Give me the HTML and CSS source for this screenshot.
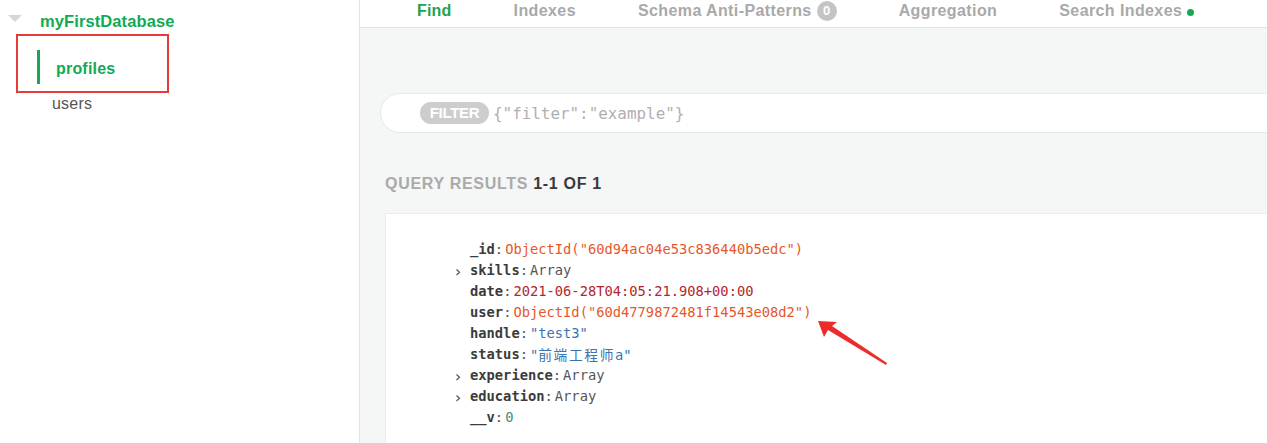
FILE: index.html
```html
<!DOCTYPE html>
<html>
<head>
<meta charset="utf-8">
<link rel="stylesheet" href="styles.css">
</head>
<body>
<aside class="sidebar">
  <div class="db-row">
    <span class="caret"></span>
    <span class="db-name">myFirstDatabase</span>
  </div>
  <div class="highlight-box">
    <div class="coll active"><span class="bar"></span><span>profiles</span></div>
  </div>
  <div class="coll plain">users</div>
</aside>
<main class="main">
  <nav class="tabs">
    <span class="tab active">Find</span>
    <span class="tab">Indexes</span>
    <span class="tab">Schema Anti-Patterns <span class="badge">0</span></span>
    <span class="tab">Aggregation</span>
    <span class="tab">Search Indexes <span class="dot"></span></span>
  </nav>
  <div class="filter-bar">
    <span class="filter-pill">FILTER</span>
    <span class="filter-text">{"filter":"example"}</span>
  </div>
  <div class="results-title">QUERY RESULTS <span class="count">1-1 OF 1</span></div>
  <section class="doc-card">
    <div class="row"><span class="chev"></span><span class="key">_id</span><span class="colon">:</span><span class="oid">ObjectId("60d94ac04e53c836440b5edc")</span></div>
    <div class="row"><span class="chev"><svg width="8" height="8" viewBox="0 0 8 8"><path d="M2.5 1.5 L5.5 4.3 L2.5 7" fill="none" stroke="#555" stroke-width="1.2"/></svg></span><span class="key">skills</span><span class="colon">:</span><span class="arr">Array</span></div>
    <div class="row"><span class="chev"></span><span class="key">date</span><span class="colon">:</span><span class="date">2021-06-28T04:05:21.908+00:00</span></div>
    <div class="row"><span class="chev"></span><span class="key">user</span><span class="colon">:</span><span class="oid">ObjectId("60d4779872481f14543e08d2")</span></div>
    <div class="row"><span class="chev"></span><span class="key">handle</span><span class="colon">:</span><span class="str">"test3"</span></div>
    <div class="row"><span class="chev"></span><span class="key">status</span><span class="colon">:</span><span class="str">"<span class="cjk">前端工程师</span>a"</span></div>
    <div class="row"><span class="chev"><svg width="8" height="8" viewBox="0 0 8 8"><path d="M2.5 1.5 L5.5 4.3 L2.5 7" fill="none" stroke="#555" stroke-width="1.2"/></svg></span><span class="key">experience</span><span class="colon">:</span><span class="arr">Array</span></div>
    <div class="row"><span class="chev"><svg width="8" height="8" viewBox="0 0 8 8"><path d="M2.5 1.5 L5.5 4.3 L2.5 7" fill="none" stroke="#555" stroke-width="1.2"/></svg></span><span class="key">education</span><span class="colon">:</span><span class="arr">Array</span></div>
    <div class="row"><span class="chev"></span><span class="key">__v</span><span class="colon">:</span><span class="num">0</span></div>
  </section>
</main>
<svg class="arrow" width="1267" height="443" viewBox="0 0 1267 443">
  <polygon points="818,321 837,322 832,326 887,363 886,365 828,330 824,337" fill="#ee2b2b"/>
</svg>
</body>
</html>
```
FILE: styles.css
```css
html, body {
  margin: 0;
  padding: 0;
}
body {
  width: 1267px;
  height: 443px;
  overflow: hidden;
  display: flex;
  position: relative;
  font-family: "Liberation Sans", Arial, sans-serif;
  background: #fff;
}
.sidebar {
  width: 359px;
  flex: none;
  border-right: 1px solid #e2e3e3;
  background: #fff;
}
.db-row {
  height: 34px;
  box-sizing: border-box;
  padding-top: 11px;
  display: flex;
  align-items: flex-start;
  line-height: 20px;
}
.caret {
  width: 0;
  height: 0;
  border-left: 7px solid transparent;
  border-right: 7px solid transparent;
  border-top: 7px solid #d6d6d6;
  margin-left: 8px;
  margin-top: 4px;
  margin-right: 18px;
}
.db-name {
  color: #13aa52;
  font-weight: bold;
  font-size: 16.5px;
  letter-spacing: 0.1px;
}
.highlight-box {
  margin-left: 16px;
  width: 153px;
  height: 59px;
  box-sizing: border-box;
  border: 2px solid #e53b3b;
  padding-top: 14px;
  padding-left: 19px;
}
.coll {
  font-size: 16px;
  line-height: 20px;
}
.coll.active {
  display: flex;
  align-items: center;
  gap: 16px;
  color: #13aa52;
  font-weight: bold;
  height: 34px;
  letter-spacing: 0.2px;
}
.coll.active span:last-child {
  padding-top: 3px;
}
.bar {
  width: 3px;
  height: 34px;
  background: #13aa52;
}
.coll.plain {
  color: #555;
  padding-left: 52px;
  padding-top: 1px;
  letter-spacing: 0.2px;
}
.main {
  flex: 1;
  display: flex;
  flex-direction: column;
  background: #f5f6f6;
  overflow: hidden;
  min-width: 0;
}
.tabs {
  height: 27px;
  box-sizing: content-box;
  border-bottom: 1px solid #e2e3e3;
  background: #fff;
  display: flex;
  align-items: flex-start;
  gap: 62px;
  padding-left: 57px;
  flex: none;
}
.tab {
  font-size: 16px;
  font-weight: bold;
  color: #a9a9a9;
  line-height: 20px;
  white-space: nowrap;
  display: flex;
  align-items: center;
  letter-spacing: 0.4px;
  padding-top: 1px;
}
.tab.active {
  color: #1ea34f;
  letter-spacing: 0.2px;
}
.badge {
  display: inline-flex;
  align-items: center;
  justify-content: center;
  width: 20px;
  height: 20px;
  border-radius: 50%;
  background: #c4c4c4;
  color: #fff;
  font-size: 13px;
  letter-spacing: 0;
  margin-left: 5px;
}
.dot {
  display: inline-block;
  width: 7px;
  height: 7px;
  border-radius: 50%;
  background: #13aa52;
  margin-left: 5px;
  margin-top: 3px;
}
.filter-bar {
  margin-top: 65px;
  margin-left: 20px;
  margin-right: -40px;
  height: 40px;
  box-sizing: border-box;
  border: 1px solid #e7e8e8;
  border-radius: 20px 0 0 20px;
  background: #fff;
  display: flex;
  align-items: center;
  padding-left: 39px;
  flex: none;
}
.filter-pill {
  background: #cdcdcd;
  color: #fff;
  font-weight: bold;
  font-size: 15px;
  height: 22px;
  line-height: 22px;
  width: 69px;
  text-align: center;
  border-radius: 11px;
  letter-spacing: -0.3px;
}
.filter-text {
  margin-left: 4px;
  font-family: "DejaVu Sans Mono", "Liberation Mono", monospace;
  font-size: 15.9px;
  color: #b0b0b0;
}
.results-title {
  margin-top: 41px;
  margin-left: 25px;
  line-height: 20px;
  font-size: 16px;
  font-weight: bold;
  color: #aaaaaa;
  letter-spacing: 0.7px;
  flex: none;
}
.count {
  color: #3a3a3a;
}
.doc-card {
  margin-top: 19px;
  margin-left: 25px;
  margin-right: -40px;
  flex: 1;
  background: #fff;
  border-top: 1px solid #ececec;
  border-left: 1px solid #ececec;
  padding-top: 24px;
  padding-left: 68px;
  font-family: "DejaVu Sans Mono", "Liberation Mono", "Noto Sans CJK SC", monospace;
  font-size: 13.75px;
}
.row {
  display: flex;
  align-items: center;
  height: 21px;
  white-space: nowrap;
}
.chev {
  width: 16px;
  flex: none;
  display: flex;
  align-items: center;
  padding-top: 4px;
  box-sizing: border-box;
}
.key {
  font-weight: bold;
  color: #3b3b3b;
}
.colon {
  color: #555;
  margin-right: 2px;
}
.oid { color: #e6572a; }
.date { color: #b3262e; }
.str { color: #3a73ae; }
.arr { color: #555; }
.num { color: #3e8d80; }
.cjk {
  font-family: "Noto Sans CJK SC", sans-serif;
  letter-spacing: 1.6px;
}
.arrow {
  position: absolute;
  left: 0;
  top: 0;
  pointer-events: none;
}
```
